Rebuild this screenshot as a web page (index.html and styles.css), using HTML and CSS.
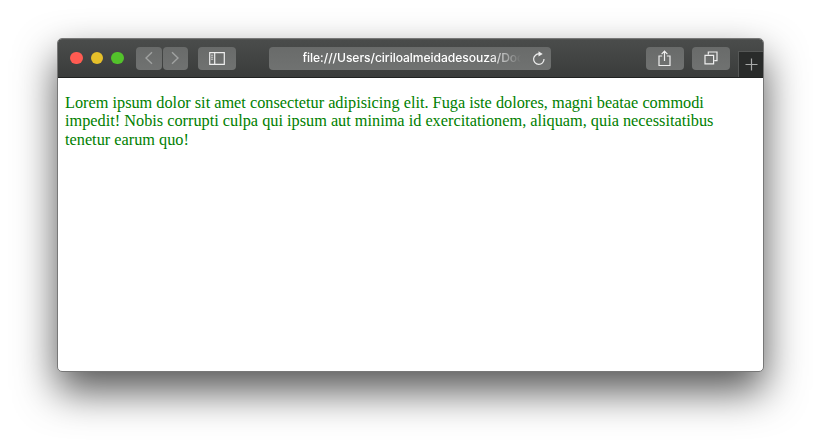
FILE: index.html
```html
<!DOCTYPE html>
<html lang="en">
<head>
<meta charset="utf-8">
<title>Lorem ipsum</title>
<link rel="stylesheet" href="styles.css">
</head>
<body>
<div class="window">
  <header class="toolbar">
    <div class="lights">
      <span class="light close"></span>
      <span class="light minimize"></span>
      <span class="light maximize"></span>
    </div>
    <div class="history">
      <span class="button nav"><svg width="8" height="14" viewBox="0 0 8 14"><path d="M7 1.200 1 7l6 5.800"/></svg></span>
      <span class="button nav"><svg width="8" height="14" viewBox="0 0 8 14"><path d="M1 1.200 7 7l-6 5.800"/></svg></span>
    </div>
    <span class="button sidebar"><svg width="16" height="13" viewBox="0 0 16 13"><path d="M.7.700h14.600v11.600H.7zM5.700.700v11.600"/><path class="thin" d="M2 3.200h2.200M2 5.200h2.200M2 7.200h2.200"/></svg></span>
    <div class="address">
      <span class="url">file:///Users/ciriloalmeidadesouza/Doc</span>
      <svg class="reload" width="14" height="15" viewBox="0 0 14 15"><path d="M7.400 3A5.200 5.200 0 1 0 12 8"/><path class="solid" d="M6.500.300v5.200L10.700 3z"/></svg>
    </div>
    <span class="button share"><svg width="13" height="17" viewBox="0 0 13 17"><path d="M4.200 6H1v9.500h11V6H8.800M6.500 11V1.300M3.600 4.100l2.900-2.900 2.900 2.900"/></svg></span>
    <span class="button tabs"><svg width="14" height="14" viewBox="0 0 14 14"><path d="M1 4.300h8.600v8.600H1zM4.300 3.500V1H13v8.600h-2.600"/></svg></span>
    <span class="new-tab"><svg width="13" height="13" viewBox="0 0 13 13"><path d="M6.500.500v12M.500 6.500h12"/></svg></span>
  </header>
  <main class="page">
    <p>Lorem ipsum dolor sit amet consectetur adipisicing elit. Fuga iste dolores, magni beatae commodi<br>impedit! Nobis corrupti culpa qui ipsum aut minima id exercitationem, aliquam, quia necessitatibus<br>tenetur earum quo!</p>
  </main>
</div>
</body>
</html>
```
FILE: styles.css
```css
* { box-sizing: border-box; }

body {
  margin: 0;
  height: 445px;
  padding: 38px 56px 0 57px;
  background: #fff;
  overflow: hidden;
}

.window {
  height: 334px;
  border: 1px solid #777;
  border-radius: 5px;
  background: #fff;
  overflow: hidden;
  box-shadow: 0 19px 40px rgba(0, 0, 0, .67);
}

.toolbar {
  display: flex;
  align-items: center;
  height: 39px;
  padding: 0 0 1px 12px;
  background: linear-gradient(#4a4c4b, #3a3c3b);
  border-top: 1px solid #505251;
  border-bottom: 1px solid #202221;
}

.lights { display: flex; gap: 8px; }

.light {
  width: 12.500px;
  height: 12.500px;
  border-radius: 50%;
}

.close { background: #ff5b52; }
.minimize { background: #e6c02a; }
.maximize { background: #53c22b; }

.history { display: flex; gap: 1px; margin-left: 12.500px; }

.button {
  display: flex;
  flex: none;
  align-items: center;
  justify-content: center;
  width: 38px;
  height: 23px;
  border-radius: 4px;
  background: linear-gradient(#696b6a, #707271);
}

.nav { width: 25.500px; }
.sidebar { margin-left: 10px; }

svg {
  fill: none;
  stroke: #eee;
  stroke-width: 1.200;
}

.nav svg { stroke: #a0a2a1; stroke-width: 1.400; }
.thin { stroke-width: .8; }

.address {
  display: flex;
  align-items: center;
  width: 282px;
  height: 23px;
  margin-left: 32.500px;
  padding: 0 5px 0 34px;
  border-radius: 4px;
  background: linear-gradient(#696b6a, #707271);
}

.url {
  white-space: nowrap;
  color: #fff;
  font: 500 12.100px/22px Inter, sans-serif;
  letter-spacing: -.05px;
  mask-image: linear-gradient(to right, #000 186px, transparent 218px);
}

.reload { flex: none; margin-left: auto; }
.solid { fill: #eee; stroke: none; }

.share { margin-left: 95px; }
.tabs { margin-left: 8px; }

.new-tab {
  display: flex;
  flex: none;
  align-items: center;
  justify-content: center;
  align-self: flex-end;
  width: 25px;
  height: 26px;
  margin: 0 0 -1px auto;
  border: solid #555756;
  border-width: 1px 0 0 1px;
  background: #292b2a;
}

.new-tab svg { stroke: #a8aaa9; }

.page {
  padding: 16px 7px;
  color: #008000;
  font: 16.300px/18.300px "Liberation Serif", serif;
}

p { margin: 0; white-space: nowrap; }
```
